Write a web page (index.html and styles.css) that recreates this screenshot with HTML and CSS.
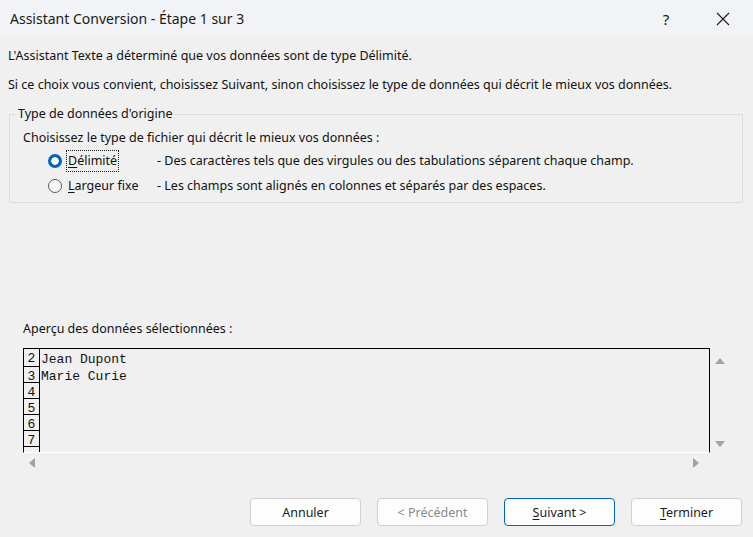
FILE: index.html
```html
<!DOCTYPE html>
<html lang="fr">
  <head>
    <meta charset="UTF-8">
    <title>Assistant Conversion</title>
    <link rel="stylesheet" href="styles.css">
  </head>
  <body>
    <div class="dialog">

      <header class="titlebar">
        <span class="title">Assistant Conversion - Étape 1 sur 3</span>
        <span class="help">?</span>
        <span class="close">
          <svg width="14" height="14" viewBox="0 0 14 14">
            <path d="M1 1 L13 13 M13 1 L1 13" stroke="#1a1a1a" stroke-width="1.1" fill="none"/>
          </svg>
        </span>
      </header>

      <main class="content">
        <p class="intro">L'Assistant Texte a déterminé que vos données sont de type Délimité.</p>
        <p class="intro">Si ce choix vous convient, choisissez Suivant, sinon choisissez le type de données qui décrit le mieux vos données.</p>

        <fieldset class="group">
          <legend>Type de données d'origine</legend>
          <p class="group-hint">Choisissez le type de fichier qui décrit le mieux vos données :</p>

          <div class="option">
            <span class="radio checked"></span>
            <span class="option-label"><span class="focus"><u>D</u>élimité</span></span>
            <span class="option-desc">- Des caractères tels que des virgules ou des tabulations séparent chaque champ.</span>
          </div>
          <div class="option">
            <span class="radio"></span>
            <span class="option-label"><span class="focus-none"><u>L</u>argeur fixe</span></span>
            <span class="option-desc">- Les champs sont alignés en colonnes et séparés par des espaces.</span>
          </div>
        </fieldset>

        <p class="preview-title">Aperçu des données sélectionnées :</p>

        <div class="preview">
          <div class="preview-grid">
            <div class="row"><span class="num">2</span><span class="cell">Jean Dupont</span></div>
            <div class="row"><span class="num">3</span><span class="cell">Marie Curie</span></div>
            <div class="row"><span class="num">4</span><span class="cell"></span></div>
            <div class="row"><span class="num">5</span><span class="cell"></span></div>
            <div class="row"><span class="num">6</span><span class="cell"></span></div>
            <div class="row"><span class="num">7</span><span class="cell"></span></div>
            <div class="row"><span class="num"></span><span class="cell"></span></div>
          </div>
          <div class="vscroll">
            <span class="arrow up"></span>
            <span class="arrow down"></span>
          </div>
          <div class="hscroll">
            <span class="arrow left"></span>
            <span class="arrow right"></span>
          </div>
        </div>
      </main>

      <footer class="buttons">
        <button type="button">Annuler</button>
        <button type="button" disabled>&lt; Précédent</button>
        <button type="button" class="default"><u>S</u>uivant &gt;</button>
        <button type="button"><u>T</u>erminer</button>
      </footer>

    </div>
  </body>
</html>
```

FILE: styles.css
```css
/* Base */
body {
  margin: 0;
  font-family: 'Noto Sans', 'Liberation Sans', sans-serif;
  font-size: 12.5px;
  color: #111111;
  background-color: #f0f0f0;
}

.dialog {
  width: 753px;
  height: 537px;
  display: flex;
  flex-direction: column;
  overflow: hidden;
}

/* Title bar */
.titlebar {
  height: 37px;
  display: flex;
  align-items: center;
  background-color: #f2f3f7;
  padding-left: 10px;
}

.title {
  flex: 1;
  font-size: 14px;
  color: #1a1a1a;
}

.help {
  width: 20px;
  font-size: 15px;
  text-align: center;
  margin-right: 40px;
}

.close {
  width: 14px;
  height: 14px;
  margin-right: 23px;
  display: flex;
}

/* Content */
.content {
  flex: 1;
  padding: 0 10px 0 8px;
}

.intro {
  margin: 0;
  line-height: 29px;
}

.intro:first-child {
  margin-top: 4px;
}

.group {
  margin: 8px 0 0 1px;
  padding: 0 0 7px 13px;
  height: 87px;
  border: 1px solid #dcdcdc;
}

.group legend {
  padding: 0 2px;
  margin-left: -7px;
  line-height: 14px;
}

.group-hint {
  margin: 7px 0 0;
  line-height: 20px;
}

.option {
  display: flex;
  align-items: center;
  height: 25px;
  padding-left: 25px;
}

.radio {
  width: 12px;
  height: 12px;
  border: 1px solid #5b5b5b;
  border-radius: 50%;
  background-color: #f7f7f7;
  margin-right: 4px;
  flex: none;
}

.radio.checked {
  width: 14px;
  height: 14px;
  border: none;
  background: radial-gradient(circle, #ffffff 0 3.5px, #0067c0 4px);
}

.option-label {
  width: 91px;
  flex: none;
}

.focus,
.focus-none {
  display: inline-block;
  padding: 1px 1px 2px;
  border: 1px dotted #1a1a1a;
}

.focus-none {
  border-color: transparent;
}

.preview-title {
  margin: 117px 0 0 15px;
  line-height: 18px;
}

/* Preview */
.preview {
  margin: 10px 0 0 15px;
  display: grid;
  grid-template-columns: 687px 20px;
  grid-template-rows: 105px 19px;
}

.preview-grid {
  border: 1px solid #000000;
  border-bottom-color: #ffffff;
  overflow: hidden;
  font-family: 'Liberation Mono', 'Courier New', monospace;
  font-size: 13px;
}

.row {
  display: flex;
  height: 16px;
  line-height: 20px;
}

.row:first-child {
  height: 17px;
  padding-top: 1px;
}

.num {
  width: 16px;
  text-align: center;
  border-right: 1px solid #000000;
  border-bottom: 1px solid #000000;
  box-sizing: border-box;
  height: 100%;
}

.row:first-child .num {
  margin-top: -1px;
  height: 18px;
}

.cell {
  padding-left: 1px;
}

.vscroll {
  display: flex;
  flex-direction: column;
  justify-content: space-between;
  align-items: center;
  padding: 10px 0 6px;
}

.hscroll {
  grid-column: 1 / 3;
  display: flex;
  justify-content: space-between;
  align-items: center;
  padding: 0 31px 0 6px;
}

.arrow {
  width: 0;
  height: 0;
  border: 5px solid transparent;
}

.arrow.up {
  border-bottom: 6px solid #a3a3a3;
  border-top-width: 0;
}

.arrow.down {
  border-top: 6px solid #a3a3a3;
  border-bottom-width: 0;
}

.arrow.left {
  border-right: 6px solid #a3a3a3;
  border-left-width: 0;
}

.arrow.right {
  border-left: 6px solid #a3a3a3;
  border-right-width: 0;
}

/* Buttons */
.buttons {
  display: flex;
  justify-content: flex-end;
  gap: 16px;
  padding: 0 11px 11px 0;
}

.buttons button {
  width: 111px;
  height: 28px;
  font-family: inherit;
  font-size: 12.5px;
  color: #1a1a1a;
  background-color: #fdfdfd;
  border: 1px solid #d0d0d0;
  border-radius: 4px;
}

.buttons button:disabled {
  color: #8a8a8a;
}

.buttons button.default {
  border-color: #0067c0;
}

u {
  text-decoration-thickness: 1px;
  text-underline-offset: 2px;
}
```
